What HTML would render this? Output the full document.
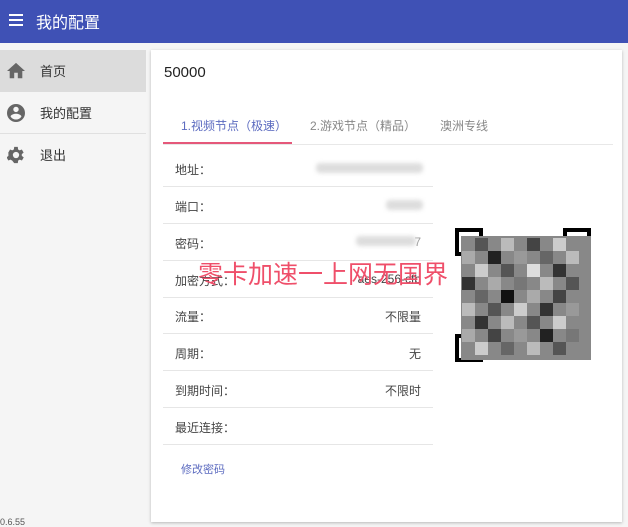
<!DOCTYPE html>
<html><head><meta charset="utf-8"><style>
*{margin:0;padding:0;box-sizing:border-box}
body{width:628px;height:527px;overflow:hidden;background:#f5f5f5;font-family:"Liberation Sans","Noto Sans CJK SC",sans-serif;position:relative;color:#333}
.hdr{position:absolute;left:0;top:0;width:628px;height:43px;background:#3f51b5;color:#fff}
.hdr .t{position:absolute;left:36px;top:9px;font-size:16px}
.side{position:absolute;left:0;top:50px;width:146px}
.item{height:42px;position:relative;font-size:13px;color:#333;border-bottom:1px solid #e0e0e0}
.item span{position:absolute;left:40px;top:11px}
.item svg{position:absolute;left:7px;top:12px}
.card{position:absolute;left:151px;top:50px;width:471px;height:472px;background:#fff;box-shadow:0 1px 3px rgba(0,0,0,.25)}
.num{position:absolute;left:13px;top:14px;font-size:15px;color:#222}
.tabs{position:absolute;left:12px;top:60px;width:450px;height:35px;border-bottom:1px solid #e8e8e8;font-size:12px}
.tab{position:absolute;top:7px;color:#888}
.ul{position:absolute;left:0;top:32px;width:129px;height:2px;background:#e5587a}
.row{position:absolute;left:12px;width:270px;height:37px;border-bottom:1px solid #e6e6e6;font-size:12px;color:#444}
.row .l{position:absolute;left:12px;top:11px}
.row .r{position:absolute;right:12px;top:11px}
.blur{position:absolute;background:#ddd;filter:blur(2px);border-radius:4px}
.red{position:absolute;left:198px;top:255px;font-size:25px;color:#ef4f6a;white-space:nowrap}
</style></head><body>
<div class="hdr"><svg style="position:absolute;left:9px;top:14px" width="14" height="12"><rect y="0" width="14" height="2" fill="#fff"/><rect y="5" width="14" height="2" fill="#fff"/><rect y="10" width="14" height="2" fill="#fff"/></svg><div class="t">我的配置</div></div>
<div class="side">
<div class="item" style="background:#dcdcdc;border:none"><svg width="18" height="18" viewBox="2 2 20 20"><path d="M10 20v-6h4v6h5v-8h3L12 3 2 12h3v8z" fill="#666"/></svg><span>首页</span></div>
<div class="item"><svg width="18" height="18" viewBox="2 2 20 20"><path d="M12 2a10 10 0 1 0 0 20 10 10 0 0 0 0-20zm0 3a3 3 0 1 1 0 6 3 3 0 0 1 0-6zm0 14.2a7.2 7.2 0 0 1-6-3.2c0-2 4-3.1 6-3.1s6 1.1 6 3.1a7.2 7.2 0 0 1-6 3.2z" fill="#666"/></svg><span>我的配置</span></div>
<div class="item" style="border:none"><svg width="18" height="18" viewBox="2 2 20 20"><path d="M19.4 13a7.8 7.8 0 0 0 0-2l2.1-1.6-2-3.5-2.5 1a7 7 0 0 0-1.7-1L15 3h-4l-.4 2.9a7 7 0 0 0-1.7 1l-2.5-1-2 3.5L4.6 11a7.8 7.8 0 0 0 0 2l-2.1 1.6 2 3.5 2.5-1a7 7 0 0 0 1.7 1L11 21h4l.4-2.9a7 7 0 0 0 1.7-1l2.5 1 2-3.5zM13 15.5a3.5 3.5 0 1 1 0-7 3.5 3.5 0 0 1 0 7z" fill="#666" transform="translate(-1 0)"/></svg><span>退出</span></div>
</div>
<div style="position:absolute;left:0;top:517px;font-size:9px;color:#555">0.6.55</div>
<div class="card">
<div class="num">50000</div>
<div class="tabs">
<div class="tab" style="left:18px;color:#5c6bc0">1.视频节点（极速）</div>
<div class="tab" style="left:147px">2.游戏节点（精品）</div>
<div class="tab" style="left:277px">澳洲专线</div>
<div class="ul"></div>
</div>
<div class="row" style="top:100px"><span class="l">地址：</span></div>
<div class="row" style="top:137px"><span class="l">端口：</span></div>
<div class="row" style="top:174px"><span class="l">密码：</span><span class="r" style="color:#999">7</span></div>
<div class="row" style="top:211px"><span class="l">加密方式：</span><span class="r">aes-256-cfb</span></div>
<div class="row" style="top:247px"><span class="l">流量：</span><span class="r">不限量</span></div>
<div class="row" style="top:284px"><span class="l">周期：</span><span class="r">无</span></div>
<div class="row" style="top:321px"><span class="l">到期时间：</span><span class="r">不限时</span></div>
<div class="row" style="top:358px"><span class="l">最近连接：</span></div>
<div style="position:absolute;left:30px;top:411px;font-size:11px;color:#5c6bc0">修改密码</div>
<div class="blur" style="left:165px;top:113px;width:107px;height:10px"></div>
<div class="blur" style="left:235px;top:150px;width:37px;height:10px"></div>
<div class="blur" style="left:205px;top:186px;width:60px;height:10px"></div>
<svg style="position:absolute;left:304px;top:178px" width="142" height="140" viewBox="0 0 142 140">
<rect x="0" y="0" width="142" height="140" fill="#fff"/>
<rect x="2" y="2" width="24" height="24" fill="none" stroke="#000" stroke-width="4"/>
<rect x="110" y="2" width="24" height="24" fill="none" stroke="#000" stroke-width="4"/>
<rect x="2" y="108" width="24" height="24" fill="none" stroke="#000" stroke-width="4"/>
<g>
<rect x="6" y="8" width="130" height="124" fill="#888"/>
<rect x="20" y="10" width="13" height="13" fill="#555"/><rect x="46" y="10" width="13" height="13" fill="#bbb"/><rect x="72" y="10" width="13" height="13" fill="#444"/><rect x="98" y="10" width="13" height="13" fill="#ccc"/>
<rect x="7" y="23" width="13" height="13" fill="#aaa"/><rect x="33" y="23" width="13" height="13" fill="#222"/><rect x="59" y="23" width="13" height="13" fill="#999"/><rect x="85" y="23" width="13" height="13" fill="#666"/><rect x="111" y="23" width="13" height="13" fill="#bbb"/>
<rect x="20" y="36" width="13" height="13" fill="#ccc"/><rect x="46" y="36" width="13" height="13" fill="#555"/><rect x="72" y="36" width="13" height="13" fill="#ddd"/><rect x="98" y="36" width="13" height="13" fill="#333"/>
<rect x="7" y="49" width="13" height="13" fill="#333"/><rect x="33" y="49" width="13" height="13" fill="#aaa"/><rect x="59" y="49" width="13" height="13" fill="#777"/><rect x="85" y="49" width="13" height="13" fill="#bbb"/><rect x="111" y="49" width="13" height="13" fill="#555"/>
<rect x="20" y="62" width="13" height="13" fill="#666"/><rect x="46" y="62" width="13" height="13" fill="#111"/><rect x="72" y="62" width="13" height="13" fill="#aaa"/><rect x="98" y="62" width="13" height="13" fill="#444"/>
<rect x="7" y="75" width="13" height="13" fill="#bbb"/><rect x="33" y="75" width="13" height="13" fill="#555"/><rect x="59" y="75" width="13" height="13" fill="#ccc"/><rect x="85" y="75" width="13" height="13" fill="#333"/><rect x="111" y="75" width="13" height="13" fill="#999"/>
<rect x="20" y="88" width="13" height="13" fill="#333"/><rect x="46" y="88" width="13" height="13" fill="#bbb"/><rect x="72" y="88" width="13" height="13" fill="#555"/><rect x="98" y="88" width="13" height="13" fill="#ccc"/>
<rect x="7" y="101" width="13" height="13" fill="#aaa"/><rect x="33" y="101" width="13" height="13" fill="#444"/><rect x="59" y="101" width="13" height="13" fill="#999"/><rect x="85" y="101" width="13" height="13" fill="#222"/><rect x="111" y="101" width="13" height="13" fill="#777"/>
<rect x="20" y="114" width="13" height="13" fill="#ccc"/><rect x="46" y="114" width="13" height="13" fill="#666"/><rect x="72" y="114" width="13" height="13" fill="#bbb"/><rect x="98" y="114" width="13" height="13" fill="#555"/>
</g>
</svg>
</div>
<div class="red">零卡加速一上网无国界</div>
</body></html>
